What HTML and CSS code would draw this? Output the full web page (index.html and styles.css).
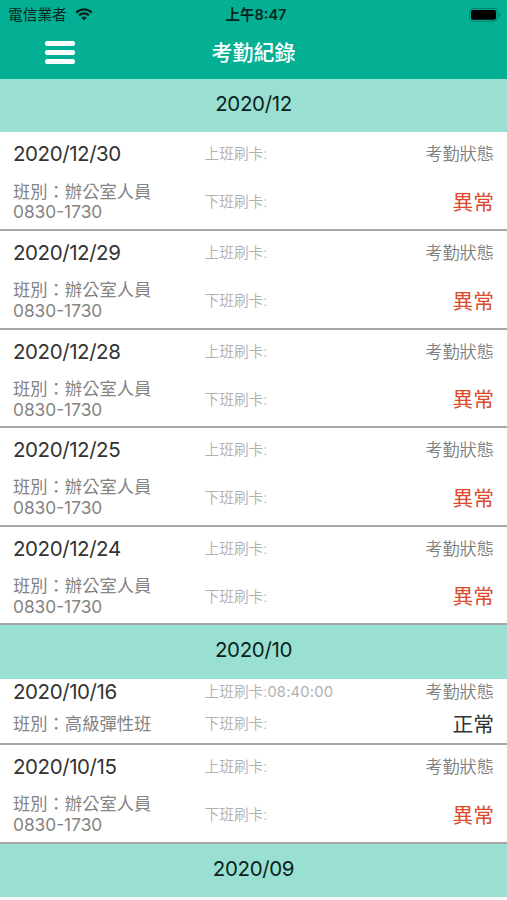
FILE: index.html
```html
<!DOCTYPE html>
<html lang="zh-Hant">
  <head>
    <meta charset="utf-8">
    <meta name="viewport" content="width=device-width, initial-scale=1.0">
    <title>考勤紀錄</title>
    <link rel="stylesheet" href="styles.css">
  </head>
  <body>
    <header class="header">
      <div class="statusbar">
        <div class="carrier">
          <span>電信業者</span>
          <svg class="wifi" width="18" height="13" viewBox="0 0 18 13">
            <path d="M1.2 4.6a11 11 0 0 1 15.6 0M4 7.5a7.1 7.1 0 0 1 10 0" fill="none" stroke="#06251f" stroke-width="2.3"/>
            <path d="M9 12.6L6.2 9.8a4 4 0 0 1 5.6 0z" fill="#06251f"/>
          </svg>
        </div>
        <div class="clock">上午8:47</div>
        <svg class="battery" width="32" height="14" viewBox="0 0 32 14">
          <rect x=".6" y=".6" width="27.8" height="12.6" rx="3.5" fill="none" stroke="#047c66"/>
          <rect x="2" y="2" width="25" height="9.8" rx="2" fill="#000"/>
          <path d="M29.8 4.8q1.7.6 1.7 2.1t-1.7 2.1z" fill="#047c66"/>
        </svg>
      </div>
      <div class="navbar">
        <div class="menu"><i></i><i></i><i></i></div>
        <h1>考勤紀錄</h1>
      </div>
    </header>

    <h2 class="month">2020/12</h2>
    <div class="record">
      <div class="date">2020/12/30</div>
      <div class="punch">上班刷卡:</div>
      <div class="label">考勤狀態</div>
      <div class="shift">班別：辦公室人員<br>0830-1730</div>
      <div class="punch">下班刷卡:</div>
      <div class="status abnormal">異常</div>
    </div>
    <div class="record">
      <div class="date">2020/12/29</div>
      <div class="punch">上班刷卡:</div>
      <div class="label">考勤狀態</div>
      <div class="shift">班別：辦公室人員<br>0830-1730</div>
      <div class="punch">下班刷卡:</div>
      <div class="status abnormal">異常</div>
    </div>
    <div class="record">
      <div class="date">2020/12/28</div>
      <div class="punch">上班刷卡:</div>
      <div class="label">考勤狀態</div>
      <div class="shift">班別：辦公室人員<br>0830-1730</div>
      <div class="punch">下班刷卡:</div>
      <div class="status abnormal">異常</div>
    </div>
    <div class="record">
      <div class="date">2020/12/25</div>
      <div class="punch">上班刷卡:</div>
      <div class="label">考勤狀態</div>
      <div class="shift">班別：辦公室人員<br>0830-1730</div>
      <div class="punch">下班刷卡:</div>
      <div class="status abnormal">異常</div>
    </div>
    <div class="record">
      <div class="date">2020/12/24</div>
      <div class="punch">上班刷卡:</div>
      <div class="label">考勤狀態</div>
      <div class="shift">班別：辦公室人員<br>0830-1730</div>
      <div class="punch">下班刷卡:</div>
      <div class="status abnormal">異常</div>
    </div>

    <h2 class="month">2020/10</h2>
    <div class="record short">
      <div class="date">2020/10/16</div>
      <div class="punch">上班刷卡:<span class="time">08:40:00</span></div>
      <div class="label">考勤狀態</div>
      <div class="shift">班別：高級彈性班</div>
      <div class="punch">下班刷卡:</div>
      <div class="status">正常</div>
    </div>
    <div class="record">
      <div class="date">2020/10/15</div>
      <div class="punch">上班刷卡:</div>
      <div class="label">考勤狀態</div>
      <div class="shift">班別：辦公室人員<br>0830-1730</div>
      <div class="punch">下班刷卡:</div>
      <div class="status abnormal">異常</div>
    </div>

    <h2 class="month">2020/09</h2>
  </body>
</html>
```
FILE: styles.css
```css
* {
  box-sizing: border-box;
  margin: 0;
  padding: 0;
}
body {
  background-color: #fff;
  color: #333;
  font-family: Inter, "Noto Sans CJK TC", sans-serif;
  overflow: hidden;
}
.header {
  height: 79px;
  background-color: #04b094;
}
.statusbar {
  display: grid;
  grid-template-columns: 1fr auto 1fr;
  align-items: center;
  height: 27px;
  padding: 0 6px 0 8px;
  color: #06251f;
  font-size: 14.7px;
  line-height: 27px;
}
.carrier {
  display: flex;
  align-items: center;
  gap: 9px;
}
.carrier span {
  padding-top: 2px;
}
.wifi {
  margin-left: -1px;
}
.clock {
  padding-left: 3px;
  font-size: 14.5px;
  font-weight: 600;
}
.battery {
  justify-self: end;
}
.navbar {
  display: grid;
  grid-template-columns: 1fr auto 1fr;
  align-items: center;
  height: 50px;
}
.menu {
  display: flex;
  flex-direction: column;
  gap: 4px;
  width: 30px;
  margin-left: 45px;
}
.menu i {
  height: 5px;
  border-radius: 2px;
  background-color: #fff;
}
h1 {
  padding-top: 1px;
  color: #fff;
  font-size: 21px;
  font-weight: 500;
  line-height: 30px;
}
.month {
  height: 53.4px;
  background-color: #99e0d2;
  color: #0c1f1d;
  font-size: 20.5px;
  font-weight: 400;
  letter-spacing: -.35px;
  line-height: 50.4px;
  text-align: center;
}
.record {
  display: grid;
  grid-template-columns: 191px 1fr auto;
  grid-template-rows: 26px 41.4px;
  row-gap: 14.3px;
  align-items: center;
  height: 98.6px;
  padding: 9px 13px 0 14px;
  border-bottom: 2px solid #a6a6a6;
}
.record.short {
  grid-template-rows: 26px 21px;
  row-gap: 8.7px;
  height: 66.4px;
  padding-top: .4px;
}
.date {
  margin-left: -1px;
  padding-bottom: 1px;
  font-size: 20.5px;
  letter-spacing: -.42px;
}
.punch {
  padding-bottom: 3px;
  margin-left: -.5px;
  color: #b0b0b0;
  font-size: 14.7px;
  font-weight: 350;
}
.time {
  font-weight: 400;
  letter-spacing: .2px;
}
.label {
  padding-bottom: 3px;
  color: #808080;
  font-size: 17.2px;
  font-weight: 350;
}
.shift {
  margin-left: -1px;
  color: #848484;
  font-size: 17.3px;
  font-weight: 380;
  line-height: 20.7px;
}
.status {
  padding-top: 2px;
  font-size: 20.7px;
  line-height: 20.7px;
  text-align: right;
}
.abnormal {
  color: #dc4a2e;
}
```
